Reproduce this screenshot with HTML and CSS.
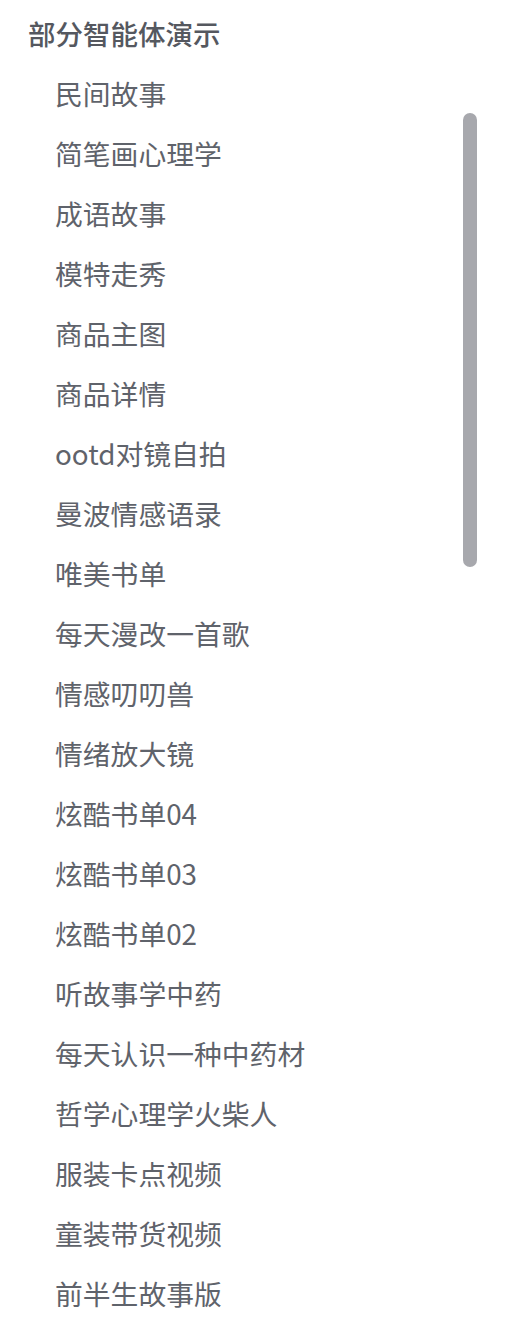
FILE: index.html
```html
<!DOCTYPE html>
<html lang="zh-CN">
  <head>
    <meta charset="UTF-8" />
    <meta name="viewport" content="width=device-width, initial-scale=1.0" />
    <title>部分智能体演示</title>
    <link rel="stylesheet" href="styles.css">
  </head>
  <body>
    <div class="agent-menu">
      <div class="am-title">部分智能体演示</div>
      <ul class="am-list">
        <li class="am-item">民间故事</li>
        <li class="am-item">简笔画心理学</li>
        <li class="am-item">成语故事</li>
        <li class="am-item">模特走秀</li>
        <li class="am-item">商品主图</li>
        <li class="am-item">商品详情</li>
        <li class="am-item">ootd对镜自拍</li>
        <li class="am-item">曼波情感语录</li>
        <li class="am-item">唯美书单</li>
        <li class="am-item">每天漫改一首歌</li>
        <li class="am-item">情感叨叨兽</li>
        <li class="am-item">情绪放大镜</li>
        <li class="am-item">炫酷书单04</li>
        <li class="am-item">炫酷书单03</li>
        <li class="am-item">炫酷书单02</li>
        <li class="am-item">听故事学中药</li>
        <li class="am-item">每天认识一种中药材</li>
        <li class="am-item">哲学心理学火柴人</li>
        <li class="am-item">服装卡点视频</li>
        <li class="am-item">童装带货视频</li>
        <li class="am-item">前半生故事版</li>
      </ul>
      <!-- 悬浮滚动条 -->
      <div class="am-scrollbar"></div>
    </div>
  </body>
</html>
```

FILE: styles.css
```css
html,
body {
  margin: 0;
  background: #fff;
}

.agent-menu {
  position: relative;
  height: 1328px;
  overflow: hidden;
  font-family: "Noto Sans CJK SC", "Noto Sans", sans-serif;
  color: #5f636b;
}

.agent-menu .am-title {
  padding: 3px 0 0 28px;
  line-height: 60px;
  font-size: 27.5px;
  font-weight: 500;
  color: #55585f;
}

.agent-menu .am-list {
  list-style: none;
  margin: 0;
  padding: 0 0 0 55px;
}

.agent-menu .am-item {
  line-height: 60px;
  font-size: 27.8px;
}

.agent-menu .am-scrollbar {
  position: absolute;
  top: 113px;
  left: 463px;
  width: 14px;
  height: 454px;
  border-radius: 7px;
  background: #a7a8ad;
}
```
